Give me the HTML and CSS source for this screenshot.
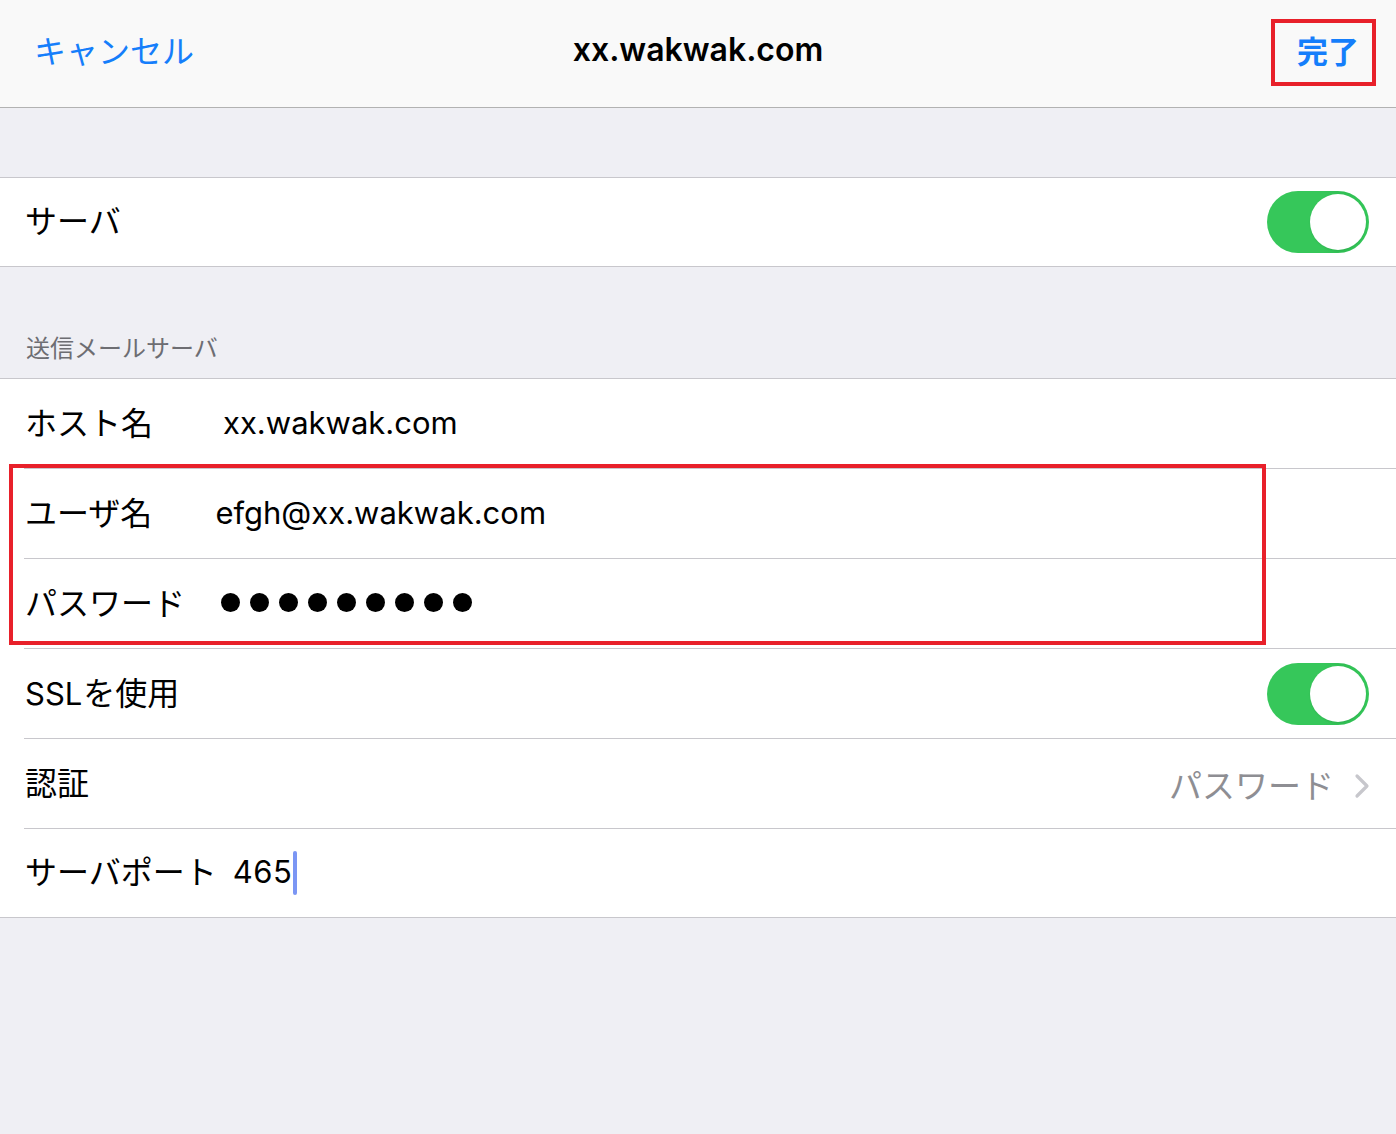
FILE: index.html
```html
<!DOCTYPE html>
<html lang="ja">
<head>
<meta charset="utf-8">
<title>xx.wakwak.com</title>
<link rel="stylesheet" href="styles.css">
</head>
<body>
<header class="navbar">
  <div class="nav-left"><span class="nav-cancel">キャンセル</span></div>
  <div class="nav-title">xx.wakwak.com</div>
  <div class="nav-right"><span class="nav-done">完了</span></div>
</header>

<div class="spacer-top"></div>

<section class="group">
  <div class="row row-last">
    <span class="label">サーバ</span>
    <span class="toggle"><span class="knob"></span></span>
  </div>
</section>

<div class="section-header">送信メールサーバ</div>

<section class="group">
  <div class="row">
    <span class="label">ホスト名</span>
    <span class="value v-host">xx.wakwak.com</span>
  </div>
  <div class="highlight">
    <div class="row">
      <span class="label">ユーザ名</span>
      <span class="value v-user">efgh@xx.wakwak.com</span>
    </div>
    <div class="row">
      <span class="label">パスワード</span>
      <span class="dots v-pass"><i></i><i></i><i></i><i></i><i></i><i></i><i></i><i></i><i></i></span>
    </div>
  </div>
  <div class="row">
    <span class="label"><span class="latin">SSL</span>を使用</span>
    <span class="toggle"><span class="knob"></span></span>
  </div>
  <div class="row">
    <span class="label">認証</span>
    <span class="detail">パスワード
      <svg class="chevron" width="16" height="26" viewBox="0 0 16 26"><path d="M3 3 L13 13 L3 23" fill="none" stroke="#c7c7cc" stroke-width="3.2" stroke-linecap="round" stroke-linejoin="round"/></svg>
    </span>
  </div>
  <div class="row row-last">
    <span class="label">サーバポート</span>
    <span class="value v-port">465<span class="cursor"></span></span>
  </div>
</section>
</body>
</html>
```

FILE: styles.css
```css
* { box-sizing: border-box; }

html, body {
  margin: 0;
  padding: 0;
}

body {
  width: 1396px;
  height: 1134px;
  overflow: hidden;
  background: #efeff4;
  font-family: Inter, "Noto Sans CJK JP", sans-serif;
  color: #000;
}

.navbar {
  height: 108px;
  background: #f9f9f9;
  border-bottom: 1px solid #b2b2b2;
  display: grid;
  grid-template-columns: 1fr auto 1fr;
  align-items: center;
}

.nav-left {
  padding-left: 34px;
  padding-bottom: 10px;
}

.nav-cancel {
  color: #157efb;
  font-size: 32px;
  font-family: "Noto Sans CJK JP", sans-serif;
}

.nav-title {
  font-family: Inter, sans-serif;
  font-size: 32px;
  font-weight: 600;
  padding-bottom: 8px;
}

.nav-right {
  display: flex;
  justify-content: flex-end;
  padding-right: 20px;
  padding-bottom: 2px;
}

.nav-done {
  width: 105px;
  height: 67px;
  border: 4px solid #e8202a;
  color: #157efb;
  font-size: 31px;
  font-weight: 700;
  font-family: "Noto Sans CJK JP", sans-serif;
  display: flex;
  align-items: center;
  justify-content: center;
  padding-left: 9px;
  padding-bottom: 6px;
}

.spacer-top {
  height: 69px;
}

.group {
  background: #fff;
  border-top: 1px solid #c8c7cc;
  border-bottom: 1px solid #c8c7cc;
}

.row {
  height: 90px;
  display: flex;
  align-items: center;
  padding-left: 26px;
  padding-right: 27px;
  position: relative;
  font-size: 31px;
}

.row::after {
  content: "";
  position: absolute;
  left: 24px;
  right: 0;
  bottom: 0;
  height: 1px;
  background: #c8c7cc;
}

.row-last {
  height: 88px;
}

.row-last::after {
  display: none;
}

.label {
  font-family: "Noto Sans CJK JP", sans-serif;
  font-size: 32px;
  white-space: nowrap;
  padding-bottom: 6px;
  margin-left: -1px;
}

.latin {
  font-family: Inter, sans-serif;
  font-size: 31px;
  margin-right: 1px;
}

.value {
  font-size: 31px;
  white-space: nowrap;
  padding-bottom: 4px;
}

.v-host { margin-left: 70px; }
.v-user { margin-left: 63px; }
.v-port { margin-left: 16px; display: flex; align-items: center; letter-spacing: 0.5px; }

.toggle {
  margin-left: auto;
  width: 102px;
  height: 62px;
  border-radius: 31px;
  background: linear-gradient(90deg, #36c75a 0%, #36c75a 55%, #31bf54 75%, #34c759 100%);
  position: relative;
}

.knob {
  position: absolute;
  right: 3px;
  top: 3px;
  width: 56px;
  height: 56px;
  border-radius: 50%;
  background: #fff;
  box-shadow: 0 1px 2px rgba(0, 0, 0, 0.08);
}

.dots {
  display: flex;
  gap: 10px;
  margin-left: 36px;
  padding-bottom: 4px;
}

.dots i {
  display: block;
  width: 19px;
  height: 19px;
  border-radius: 50%;
  background: #000;
}

.detail {
  margin-left: auto;
  display: flex;
  align-items: center;
  color: #8e8e93;
  font-family: "Noto Sans CJK JP", sans-serif;
  font-size: 33px;
  margin-right: -1px;
}

.chevron {
  margin-left: 20px;
  margin-top: 4px;
}

.cursor {
  display: inline-block;
  width: 4px;
  height: 44px;
  background: #7b96f4;
  border-radius: 2px;
  margin-left: 1px;
  margin-top: 4px;
}

.section-header {
  height: 111px;
  display: flex;
  align-items: flex-end;
  padding-left: 26px;
  padding-bottom: 14px;
  font-family: "Noto Sans CJK JP", sans-serif;
  font-size: 24px;
  color: #6d6d72;
}

.highlight {
  position: relative;
}

.highlight::before {
  content: "";
  position: absolute;
  top: -5px;
  left: 9px;
  right: 130px;
  bottom: 4px;
  border: 4px solid #e8202a;
  z-index: 2;
  pointer-events: none;
}
```
